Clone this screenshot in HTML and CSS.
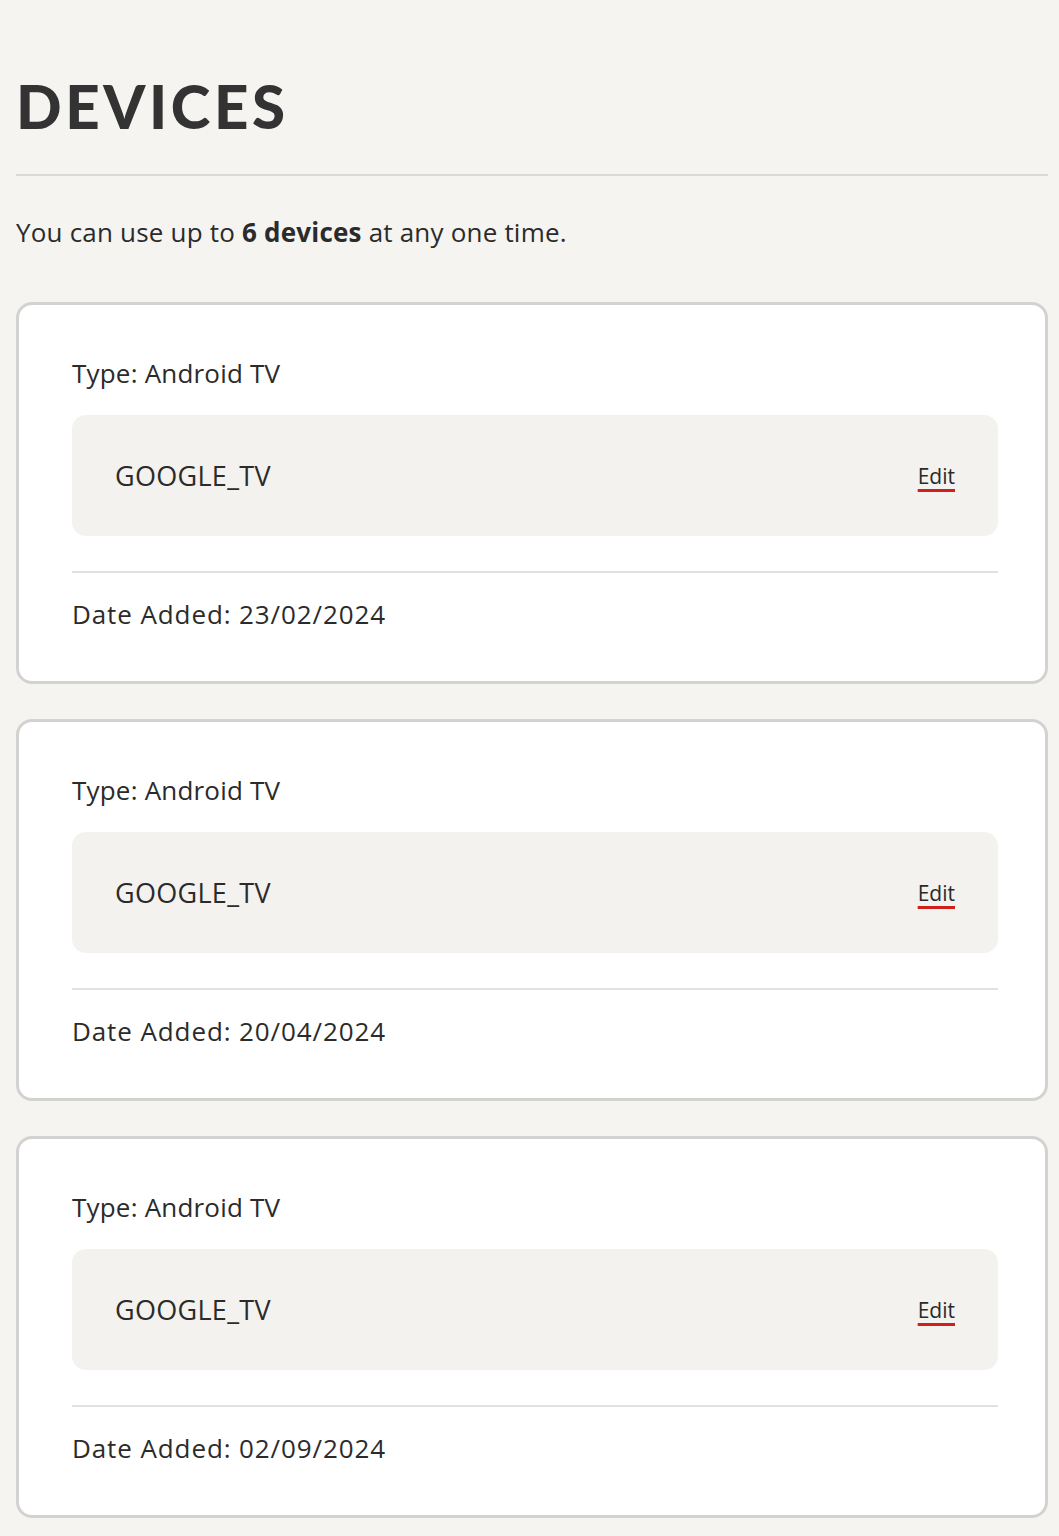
FILE: index.html
```html
<!DOCTYPE html>
<html lang="en">
<head>
<meta charset="utf-8">
<title>Devices</title>
<link rel="stylesheet" href="styles.css">
</head>
<body>
<main class="page">
  <h1 class="title">DEVICES</h1>
  <hr class="rule">
  <p class="intro">You can use up to <strong>6 devices</strong> at any one time.</p>
  <section class="device">
    <div class="type">Type: Android TV</div>
    <div class="name-box">
      <span class="name">GOOGLE_TV</span>
      <a class="edit" href="#">Edit</a>
    </div>
    <div class="date">Date Added: 23/02/2024</div>
  </section>
  <section class="device">
    <div class="type">Type: Android TV</div>
    <div class="name-box">
      <span class="name">GOOGLE_TV</span>
      <a class="edit" href="#">Edit</a>
    </div>
    <div class="date">Date Added: 20/04/2024</div>
  </section>
  <section class="device">
    <div class="type">Type: Android TV</div>
    <div class="name-box">
      <span class="name">GOOGLE_TV</span>
      <a class="edit" href="#">Edit</a>
    </div>
    <div class="date">Date Added: 02/09/2024</div>
  </section>
</main>
</body>
</html>
```
FILE: styles.css
```css
html, body {
  margin: 0;
  padding: 0;
  background: #f6f4f1;
}
body {
  font-family: "Open Sans", "Noto Sans", sans-serif;
  color: #2b2b2b;
}
.page {
  padding: 0 11px 0 16px;
}
.title {
  margin: 0;
  padding-top: 72px;
  font-family: "Lato", "Roboto", sans-serif;
  font-weight: 900;
  font-size: 60px;
  line-height: 68px;
  color: #333333;
  letter-spacing: 3.6px;
}
.rule {
  margin: 34px 0 0 0;
  border: 0;
  border-top: 2px solid #dcd9d5;
  height: 0;
}
.intro {
  margin: 38px 0 0 0;
  font-size: 26px;
  line-height: 36px;
  letter-spacing: 0.2px;
}
.intro strong {
  font-weight: 700;
}
.device {
  margin-top: 52px;
  background: #ffffff;
  border: 3px solid #d3d2d0;
  border-radius: 16px;
  padding: 50px 47px 49px 53px;
}
.device + .device {
  margin-top: 35px;
}
.type {
  font-size: 26px;
  line-height: 36px;
  letter-spacing: 0.2px;
}
.name-box {
  margin: 24px 0 35px 0;
  background: #f4f2ef;
  border-radius: 14px;
  height: 121px;
  padding: 0 43px;
  display: flex;
  align-items: center;
  justify-content: space-between;
}
.name {
  font-size: 27px;
  letter-spacing: 0.3px;
}
.edit {
  font-size: 21px;
  color: #2b2b2b;
  text-decoration: underline;
  text-decoration-color: #d0201b;
  text-decoration-thickness: 3px;
  text-underline-offset: 5px;
}
.date {
  border-top: 2px solid #e3e1de;
  padding-top: 23px;
  font-size: 26px;
  line-height: 36px;
  letter-spacing: 0.9px;
}
```
